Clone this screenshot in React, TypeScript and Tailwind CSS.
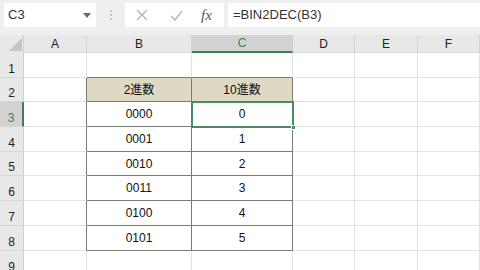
import React from "react";

const COLS = [
  { key: "A", w: 63 },
  { key: "B", w: 105 },
  { key: "C", w: 101 },
  { key: "D", w: 62 },
  { key: "E", w: 63 },
  { key: "F", w: 62 },
];

const ROW_H = [25, 24, 25, 25, 24, 25, 25, 25, 25];

const data: Record<number, [string, string]> = {
  2: ["2進数", "10進数"],
  3: ["0000", "0"],
  4: ["0001", "1"],
  5: ["0010", "2"],
  6: ["0011", "3"],
  7: ["0100", "4"],
  8: ["0101", "5"],
};

const font = { fontFamily: '"Liberation Sans", "Noto Sans CJK JP", sans-serif' };

function Toolbar() {
  return (
    <div className="flex h-[35px] items-start bg-[#efefef] pt-[3px]">
      <div className="ml-[4px] flex h-[24px] w-[92px] items-center justify-between bg-white pl-[4px] pr-[5px]">
        <span className="text-[13px] text-[#333]">C3</span>
        <svg width="8" height="5" viewBox="0 0 8 5">
          <path d="M0 0 L8 0 L4 5 Z" fill="#6b6b6b" />
        </svg>
      </div>
      <div className="flex h-[24px] w-[29px] flex-col items-center justify-center gap-[2px]">
        <div className="h-[2px] w-[2px] rounded-full bg-[#b8b8b8]" />
        <div className="h-[2px] w-[2px] rounded-full bg-[#b8b8b8]" />
        <div className="h-[2px] w-[2px] rounded-full bg-[#b8b8b8]" />
      </div>
      <div className="flex h-[24px] w-[99px] items-center bg-white">
        <svg className="ml-[11px]" width="12" height="12" viewBox="0 0 12 12">
          <path d="M1 1 L11 11 M11 1 L1 11" stroke="#b0b0b0" strokeWidth="1.2" />
        </svg>
        <svg className="ml-[22px]" width="13" height="11" viewBox="0 0 13 11">
          <path d="M1 6 L5 10 L12 1" stroke="#b0b0b0" strokeWidth="1.3" fill="none" />
        </svg>
        <span
          className="ml-[18px] text-[15px] italic text-[#555]"
          style={{ fontFamily: '"Liberation Serif", serif' }}
        >
          fx
        </span>
      </div>
      <div className="ml-[4px] flex h-[24px] flex-1 items-center bg-white pl-[5px]">
        <span className="text-[13px] text-[#333]">=BIN2DEC(B3)</span>
      </div>
    </div>
  );
}

function HeaderRow() {
  return (
    <div className="flex h-[18px] bg-[#e8e8e8]">
      <div className="relative w-[24px] border-r border-[#cfcfcf]">
        <svg className="absolute left-[9px] top-[3px]" width="13" height="13" viewBox="0 0 13 13">
          <path d="M13 0 L13 13 L0 13 Z" fill="#c4c4c4" />
        </svg>
      </div>
      {COLS.map((c) => (
        <div
          key={c.key}
          style={{ width: c.w }}
          className={
            c.key === "C"
              ? "flex items-center justify-center border-b-2 border-r border-b-[#3f7f57] border-r-[#cfcfcf] bg-[#d3d3d3] text-[12px] text-[#3f7f57]"
              : "flex items-center justify-center border-b border-r border-b-[#d8d8d8] border-r-[#d4d4d4] text-[12px] text-[#222]"
          }
        >
          {c.key}
        </div>
      ))}
    </div>
  );
}

export default function App() {
  return (
    <div className="h-[270px] w-[480px] overflow-hidden bg-white" style={font}>
      <Toolbar />
      <HeaderRow />
      <div className="relative">
        {ROW_H.map((h, i) => {
          const r = i + 1;
          const inTable = r >= 2 && r <= 8;
          return (
            <div key={r} className="flex" style={{ height: h }}>
              <div
                className={
                  r === 3
                    ? "flex w-[24px] items-center justify-center border-b border-r-2 border-b-[#d6d6d6] border-r-[#3f7f57] bg-[#d3d3d3] pt-[7px] text-[12px] text-[#3f7f57]"
                    : "flex w-[24px] items-center justify-center border-b border-r border-b-[#d6d6d6] border-r-[#d0d0d0] bg-[#e8e8e8] pt-[7px] text-[12px] text-[#222]"
                }
              >
                {r}
              </div>
              {COLS.map((c) => {
                const isTableCol = c.key === "B" || c.key === "C";
                let cls = "flex items-center justify-center border-b border-r text-[12px] text-[#111] ";
                let bb = "border-b-[#e2e2e2]";
                let br = "border-r-[#e2e2e2]";
                if (inTable && isTableCol) {
                  bb = "border-b-[#7a7a7a]";
                  br = "border-r-[#7a7a7a]";
                }
                if (r === 1 && isTableCol) bb = "border-b-[#7a7a7a]";
                if (inTable && c.key === "A") br = "border-r-[#7a7a7a]";
                const bg = r === 2 && isTableCol ? "bg-[#ddd9c3]" : "";
                let txt = "";
                if (inTable && isTableCol) txt = data[r][c.key === "B" ? 0 : 1];
                return (
                  <div
                    key={c.key}
                    style={{ width: c.w }}
                    className={`${cls}${bb} ${br} ${bg}`}
                  >
                    {txt}
                  </div>
                );
              })}
            </div>
          );
        })}
        <div className="pointer-events-none absolute left-[191px] top-[48px] h-[27px] w-[103px] border-2 border-[#4a8a62]">
          <div className="absolute bottom-[-4px] right-[-4px] h-[5px] w-[5px] border border-white bg-[#4a8a62]" />
        </div>
      </div>
    </div>
  );
}
